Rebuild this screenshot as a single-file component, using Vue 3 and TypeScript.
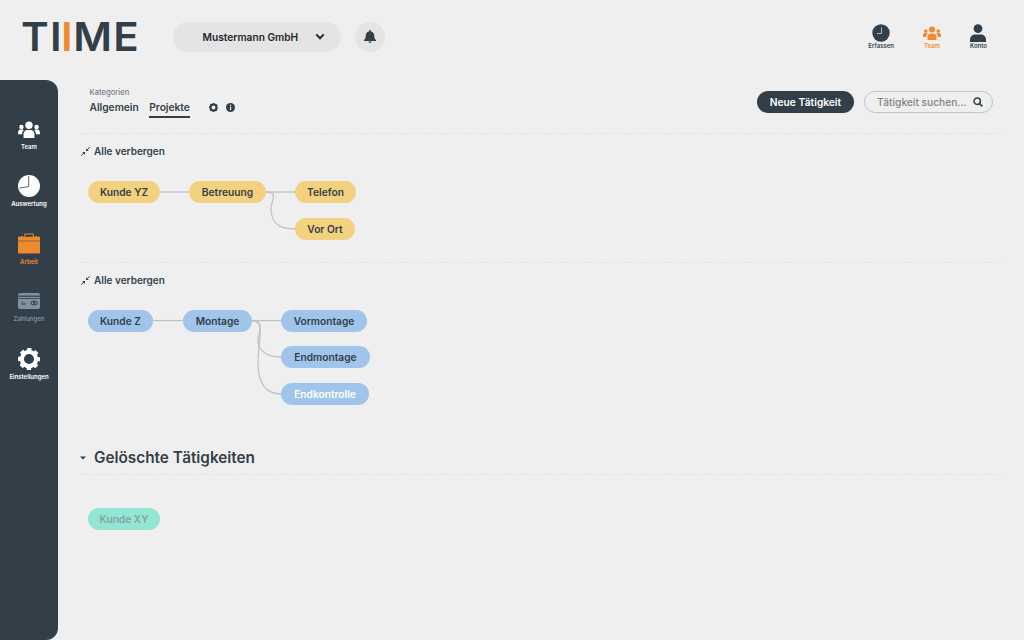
<script setup lang="ts">
interface Node { label: string; x: number; y: number; w: number; light?: boolean }
interface Diagram { color: string; height: number; nodes: Node[]; links: string[] }

const diagrams: Diagram[] = [
  {
    color: 'yellow', height: 92,
    nodes: [
      { label: 'Kunde YZ', x: 8, y: 11, w: 72 },
      { label: 'Betreuung', x: 109, y: 11, w: 77 },
      { label: 'Telefon', x: 215, y: 11, w: 61 },
      { label: 'Vor Ort', x: 215, y: 48, w: 60 },
    ],
    links: ['M80 22H109', 'M186 22H215', 'M186 22C200 22 190 32 191 40C192 54 200 59 215 59'],
  },
  {
    color: 'blue', height: 141,
    nodes: [
      { label: 'Kunde Z', x: 8, y: 10.6, w: 65 },
      { label: 'Montage', x: 103, y: 10.6, w: 69 },
      { label: 'Vormontage', x: 201, y: 10.6, w: 86 },
      { label: 'Endmontage', x: 201, y: 47, w: 89 },
      { label: 'Endkontrolle', x: 201, y: 84, w: 88, light: true },
    ],
    links: ['M73 21.600H103', 'M172 21.600H201', 'M172 21.600C186 21.600 178 35 178 41C178 51 186 58 201 58', 'M172 21.600C186 21.600 178 41 178 63C178 85 186 95 201 95'],
  },
]

function nodeStyle(n: Node) {
  return { left: n.x + 'px', top: n.y + 'px', width: n.w + 'px' }
}
</script>

<template>
  <div class="page">
    <header class="topbar">
      <div class="logo">T<span class="logo-i">I</span><span class="logo-o">I</span><span class="logo-m">M</span>E</div>
      <div class="company">
        <span>Mustermann GmbH</span>
        <svg width="10" height="7" viewBox="0 0 11 8"><path d="M1.200 1.600 5.500 6 9.800 1.600" fill="none" stroke="#222b31" stroke-width="2.200" /></svg>
      </div>
      <div class="bell">
        <svg width="12" height="13" viewBox="0 0 13 14"><path d="M6.500 0a1 1 0 0 1 1 1v.6c2.200.4 3.600 2.200 3.600 4.400 0 3 .8 3.900 1.900 5V12H0v-1c1.100-1.100 1.900-2 1.900-5 0-2.200 1.400-4 3.600-4.400V1a1 1 0 0 1 1-1ZM4.800 12.500h3.400a1.700 1.500 0 0 1-3.400 0Z" fill="#323f48" /></svg>
      </div>
      <nav class="topnav">
        <div class="topnav-item">
          <svg width="18" height="18" viewBox="0 0 18 18"><circle cx="9" cy="9" r="8.700" fill="#323f48" /><path d="M9.500 3.500V9.500H5" fill="none" stroke="#efefef" stroke-width=".7" /></svg>
          <span>Erfassen</span>
        </div>
        <div class="topnav-item active">
          <svg width="18" height="18" viewBox="0 0 36 28"><g fill="#f08a2e"><circle cx="18" cy="7" r="6" /><circle cx="5.500" cy="10" r="3.700" /><circle cx="30.500" cy="10" r="3.700" /><path d="M9 28v-6c0-4 3-7 6-7h6c3 0 6 3 6 7v6Z" /><path d="M0 22v-3c0-3 2-5 4-5h3c1 0 2 .5 2.500 1-2 2-3 4-3 7Z" /><path d="M36 22v-3c0-3-2-5-4-5h-3c-1 0-2 .5-2.500 1 2 2 3 4 3 7Z" /></g></svg>
          <span>Team</span>
        </div>
        <div class="topnav-item">
          <svg width="16" height="18" viewBox="0 0 16 18"><circle cx="8" cy="4.600" r="4.400" fill="#323f48" /><path d="M0 18v-2.500C0 12.500 2.500 10.500 5 10.500h6c2.500 0 5 2 5 5V18Z" fill="#323f48" /></svg>
          <span>Konto</span>
        </div>
      </nav>
    </header>

    <div class="body">
      <aside class="sidebar">
        <div class="side-item">
          <div class="slot"><svg width="22" height="17" viewBox="0 0 36 28"><g fill="#fff"><circle cx="18" cy="7" r="6" /><circle cx="5.500" cy="10" r="3.700" /><circle cx="30.500" cy="10" r="3.700" /><path d="M9 28v-6c0-4 3-7 6-7h6c3 0 6 3 6 7v6Z" /><path d="M0 22v-3c0-3 2-5 4-5h3c1 0 2 .5 2.500 1-2 2-3 4-3 7Z" /><path d="M36 22v-3c0-3-2-5-4-5h-3c-1 0-2 .5-2.500 1 2 2 3 4 3 7Z" /></g></svg></div>
          <span>Team</span>
        </div>
        <div class="side-item">
          <div class="slot"><svg width="22" height="22" viewBox="0 0 22 22"><circle cx="11" cy="11" r="11" fill="#fff" /><path d="M10.700 1V11.500L1.400 13.200" fill="none" stroke="#323f48" stroke-width=".8" /></svg></div>
          <span>Auswertung</span>
        </div>
        <div class="side-item orange">
          <div class="slot"><svg width="22" height="21" viewBox="0 0 23 21"><path d="M7 3.500V1.500C7 .8 7.500.5 8 .5H15C15.500.5 16 .8 16 1.500V3.500" fill="none" stroke="#f08a2e" stroke-width="1.100" /><path d="M0 3.500H3V2.600H5V3.500H18V2.600H20V3.500H23V7.500H0Z" fill="#f08a2e" /><path d="M0 8.200H23V20a1 1 0 0 1-1 1H1a1 1 0 0 1-1-1Z" fill="#f08a2e" /></svg></div>
          <span>Arbeit</span>
        </div>
        <div class="side-item muted">
          <div class="slot"><svg width="22" height="16" viewBox="0 0 22 16"><rect width="22" height="16" rx="2" fill="#7f929f" /><rect y="2.600" width="22" height="1.200" fill="#323f48" /><rect y="5" width="22" height=".8" fill="#323f48" /><rect x="3.500" y="10.500" width="4.500" height="1" fill="#323f48" /><rect x="3.500" y="8.800" width="1.500" height="1" fill="#323f48" /><circle cx="15" cy="10" r="1.900" fill="none" stroke="#323f48" /><circle cx="17.500" cy="10" r="1.900" fill="none" stroke="#323f48" /></svg></div>
          <span>Zahlungen</span>
        </div>
        <div class="side-item">
          <div class="slot"><svg width="22" height="22" viewBox="0 0 24 24"><circle cx="12" cy="12" r="7.800" fill="none" stroke="#fff" stroke-width="4.600" /><circle cx="12" cy="12" r="10.300" fill="none" stroke="#fff" stroke-width="3.400" stroke-dasharray="4.600 3.490" stroke-dashoffset="2.300" /></svg></div>
          <span>Einstellungen</span>
        </div>
      </aside>

      <main class="main">
        <section class="toolbar">
          <div class="tabs-wrap">
            <div class="tabs-label">Kategorien</div>
            <div class="tabs">
              <span class="tab">Allgemein</span>
              <span class="tab selected">Projekte</span>
              <svg class="tab-icon first" width="9" height="9" viewBox="0 0 24 24"><circle cx="12" cy="12" r="7.800" fill="none" stroke="#323f48" stroke-width="5.500" /><circle cx="12" cy="12" r="10.300" fill="none" stroke="#323f48" stroke-width="3.500" stroke-dasharray="4.600 3.490" stroke-dashoffset="2.300" /></svg>
              <svg class="tab-icon" width="9" height="9" viewBox="0 0 9 9"><circle cx="4.500" cy="4.500" r="4.500" fill="#323f48" /><rect x="3.900" y="3.800" width="1.300" height="3.400" fill="#efefef" /><rect x="3.900" y="1.800" width="1.300" height="1.200" fill="#efefef" /></svg>
            </div>
          </div>
          <div class="actions">
            <div class="new-btn">Neue Tätigkeit</div>
            <div class="search">
              <span>Tätigkeit suchen...</span>
              <svg width="10" height="10" viewBox="0 0 10 10"><circle cx="4.200" cy="4.200" r="3.200" fill="none" stroke="#323f48" stroke-width="1.500" /><path d="M6.600 6.600 9.400 9.400" stroke="#323f48" stroke-width="1.600" /></svg>
            </div>
          </div>
        </section>

        <section v-for="(d, i) in diagrams" :key="i" class="group" :class="{ bordered: i === 0 }">
          <div class="hide-all">
            <svg width="9" height="9" viewBox="0 0 9 9"><g fill="#323f48"><path d="M5 4V1.200L7.800 4Z" /><path d="M4 5V7.800L1.200 5Z" /></g><path d="M6.300 2.700 8.700.3M2.700 6.300.3 8.700" stroke="#323f48" stroke-width="1" /></svg>
            <span>Alle verbergen</span>
          </div>
          <div class="diagram" :style="{ height: d.height + 'px' }">
            <svg class="links" width="300" :height="d.height" fill="none">
              <path v-for="(l, k) in d.links" :key="k" :d="l" stroke="#c2c2c2" stroke-width="1.300" />
            </svg>
            <div
              v-for="n in d.nodes"
              :key="n.label"
              class="node"
              :class="[d.color, { light: n.light }]"
              :style="nodeStyle(n)"
            >{{ n.label }}</div>
          </div>
        </section>

        <section class="deleted">
          <div class="deleted-head">
            <svg width="6" height="4" viewBox="0 0 6 4"><path d="M0 .5H6L3 3.500Z" fill="#323f48" /></svg>
            <h2>Gelöschte Tätigkeiten</h2>
          </div>
          <div class="deleted-list">
            <div class="pill-deleted">Kunde XY</div>
          </div>
        </section>
      </main>
    </div>
  </div>
</template>

<style>
html, body { margin: 0; background: #efefef; }
</style>

<style scoped>
.page {
  width: 1024px;
  height: 640px;
  overflow: hidden;
  background: #efefef;
  color: #323f48;
  font-family: Inter, "Noto Sans", sans-serif;
  display: flex;
  flex-direction: column;
}
.topbar {
  height: 80px;
  flex: none;
  display: flex;
  align-items: center;
  padding: 0 37px 7px 21px;
  box-sizing: border-box;
}
.logo {
  width: 117px;
  font-size: 40px;
  font-weight: 600;
  line-height: 44px;
  color: #323f48;
  letter-spacing: 1.200px;
  white-space: nowrap;
  transform: scaleX(1.05);
  transform-origin: left center;
}
.logo-i { letter-spacing: -.500px; }
.logo-o { color: #f08a2e; letter-spacing: .500px; }
.company {
  margin-left: 35px;
  width: 168px;
  height: 30px;
  border-radius: 15px;
  background: #e4e4e4;
  display: flex;
  align-items: center;
  box-sizing: border-box;
  padding-left: 29.500px;
  gap: 17px;
  font-size: 10.200px;
  font-weight: 600;
  color: #1d262c;
  white-space: nowrap;
}
.bell {
  margin-left: 14px;
  width: 30px;
  height: 30px;
  border-radius: 50%;
  background: #e4e4e4;
  display: flex;
  align-items: center;
  justify-content: center;
}
.topnav {
  margin-left: auto;
  align-self: flex-start;
  margin-top: 24px;
  display: flex;
  gap: 29px;
}
.topnav-item {
  display: flex;
  flex-direction: column;
  align-items: center;
  font-size: 6px;
  font-weight: 600;
  line-height: 8px;
  white-space: nowrap;
}
.topnav-item.active { color: #f08a2e; }
.body { flex: 1; display: flex; min-height: 0; }
.sidebar {
  width: 58px;
  flex: none;
  background: #323f48;
  border-radius: 0 12px 12px 0;
  display: flex;
  flex-direction: column;
  align-items: center;
  padding-top: 38px;
  box-sizing: border-box;
  color: #fff;
}
.side-item {
  height: 57.400px;
  display: flex;
  flex-direction: column;
  align-items: center;
  gap: 3px;
  font-size: 6px;
  font-weight: 600;
  line-height: 8px;
  white-space: nowrap;
}
.slot {
  height: 22px;
  display: flex;
  align-items: center;
}
.side-item.orange { color: #f08a2e; }
.side-item.muted { color: #7f929f; }
.main {
  flex: 1;
  padding: 0 22px;
  min-width: 0;
}
.toolbar {
  height: 54px;
  box-sizing: border-box;
  border-bottom: 1px dashed #e2e2e2;
  display: flex;
  justify-content: space-between;
  padding: 8px 0 0 9.500px;
}
.tabs-label {
  font-size: 7.600px;
  font-weight: 500;
  color: #75818a;
  line-height: 9px;
}
.tabs {
  margin-top: 3px;
  display: flex;
  align-items: flex-start;
  font-size: 10.200px;
  font-weight: 600;
  line-height: 14px;
}
.tab { padding-bottom: 2px; margin-right: 10.500px; }
.tab.selected { border-bottom: 2px solid #323f48; }
.tab-icon { margin: 3px 7px 0 0; }
.tab-icon.first { margin-left: 9px; margin-right: 8px; }
.actions {
  display: flex;
  align-items: flex-start;
  gap: 10px;
  padding: 3px 9px 0 0;
}
.new-btn {
  width: 97px;
  height: 22px;
  border-radius: 11px;
  background: #323f48;
  color: #fff;
  font-size: 10.200px;
  font-weight: 600;
  line-height: 22px;
  text-align: center;
}
.search {
  width: 129px;
  height: 22px;
  box-sizing: border-box;
  border: 1px solid #bcc6cf;
  border-radius: 11px;
  display: flex;
  align-items: center;
  justify-content: space-between;
  padding: 0 9px 0 12px;
  font-size: 10.200px;
  font-weight: 500;
  color: #7e8388;
  white-space: nowrap;
}
.group { box-sizing: border-box; }
.group.bordered { border-bottom: 1px dashed #e2e2e2; }
.hide-all {
  display: flex;
  align-items: center;
  gap: 4px;
  height: 35px;
  padding: 0 0 1px 1px;
  box-sizing: border-box;
  font-size: 10px;
  font-weight: 600;
}
.diagram { position: relative; margin-top: 1px; }
.links { position: absolute; left: 0; top: 0; }
.node {
  position: absolute;
  height: 22px;
  border-radius: 11px;
  font-size: 10.200px;
  font-weight: 600;
  line-height: 22px;
  text-align: center;
  white-space: nowrap;
}
.node.yellow { background: #f3d27f; }
.node.blue { background: #a0c4ea; }
.node.light { color: #fff; }
.deleted-head {
  display: flex;
  align-items: center;
  gap: 8px;
  height: 34px;
  border-bottom: 1px dashed #e2e2e2;
}
.deleted-head svg { margin-top: 1px; }
.deleted-head h2 {
  margin: 2px 0 0;
  font-size: 15.300px;
  font-weight: 600;
  line-height: 20px;
}
.deleted-list { padding: 33px 0 0 8px; }
.pill-deleted {
  width: 72px;
  height: 22px;
  border-radius: 11px;
  background: #93e6d3;
  color: #83a3a6;
  font-size: 10.200px;
  font-weight: 600;
  line-height: 22px;
  text-align: center;
}
</style>
